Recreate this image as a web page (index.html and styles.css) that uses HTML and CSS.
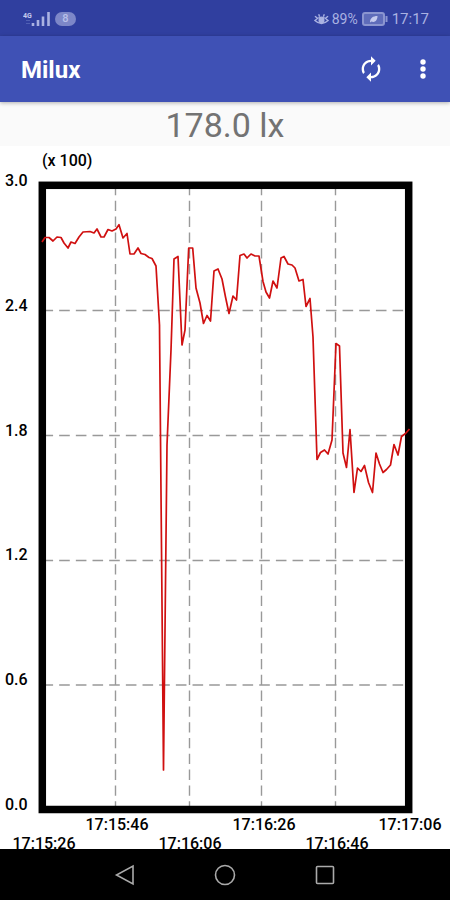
FILE: index.html
```html
<!DOCTYPE html>
<html lang="en">
<head>
<meta charset="utf-8">
<meta name="viewport" content="width=device-width, initial-scale=1">
<title>Milux</title>
<link rel="stylesheet" href="styles.css">
</head>
<body>
<div class="status">
  <div class="status-group">
    <svg class="signal" viewBox="0 0 28 16" aria-hidden="true">
      <text class="network" x="0" y="7">4G</text>
      <path class="faint" d="M3 9.500h4M3 12.500h4"/>
      <path d="M10 15v-3M15 15V9M20 15V5.500M25.500 15V1"/>
    </svg>
    <span class="badge">8</span>
  </div>
  <div class="status-group">
    <svg class="eye" viewBox="0 0 16 14" aria-hidden="true">
      <path d="M1 8.500Q8 1.500 15 8.500Q8 15 1 8.500zM1 4l2.500 2M5 2l1 2.500M11 2l-1 2.500M15 4l-2.500 2"/>
      <circle cx="8" cy="8.500" r="2.500"/>
    </svg>
    <span class="percent">89%</span>
    <svg class="battery" viewBox="0 0 26 14" aria-hidden="true">
      <rect class="charge" x="1" y="1" width="21" height="12" rx="2"/>
      <rect class="shell" x="1" y="1" width="21" height="12" rx="2"/>
      <path class="shell" d="M24.500 4v6"/>
      <path class="leaf" d="M8 10.500C8 6 11 4 15.500 4C15.500 8 13 11 9.500 9.500z"/>
    </svg>
    <span class="clock">17:17</span>
  </div>
</div>
<header class="app-bar">
  <h1>Milux</h1>
  <div class="actions">
    <button type="button" aria-label="Refresh">
      <svg class="icon" viewBox="0 0 24 24" aria-hidden="true"><path d="M12 6v3l4-4-4-4v3c-4.420 0-8 3.580-8 8 0 1.570.460 3.030 1.240 4.260L6.700 14.800c-.450-.830-.700-1.790-.700-2.800 0-3.310 2.690-6 6-6zm6.760 1.740L17.300 9.200c.440.840.700 1.790.700 2.800 0 3.310-2.690 6-6 6v-3l-4 4 4 4v-3c4.420 0 8-3.580 8-8 0-1.570-.460-3.030-1.240-4.260z"/></svg>
    </button>
    <button type="button" aria-label="More options">
      <svg class="icon" viewBox="0 0 24 24" aria-hidden="true"><circle cx="12" cy="6" r="2.300"/><circle cx="12" cy="12" r="2.300"/><circle cx="12" cy="18" r="2.300"/></svg>
    </button>
  </div>
</header>
<main>
  <p class="reading">178.0 lx</p>
  <svg class="chart" viewBox="0 146 450 703" role="img" aria-label="Illuminance over time">
    <g class="grid">
      <path class="rows" d="M42.500 310.500H408M42.500 435.500H408M42.500 560.500H408M42.500 685H408"/>
      <path class="columns" d="M115.500 185V810M189.500 185V810M261.500 185V810M335.500 185V810"/>
    </g>
    <rect class="frame" x="42.300" y="185.300" width="366.400" height="624.200"/>
    <polyline class="trace" points="42,242 45,237.500 49,237.500 53,241 57,237 61,237.500 64,243 68,248 71,242 75,243.500 79,237 83,232 90,231.500 94,233 97,229 101,237 104,237 108,229.500 112,231 116,229 119,224.700 123,238 127,233.500 130,254 134,254 138,248 141,253.500 145,254.500 149,257.500 152,258.500 156,266 159.500,325 163.500,770 167,445 171,350 174,259 178,256.500 182,345 185,330 188.700,248 192.700,248 196,288 200,303 203.500,323.500 207,315.500 210.500,321 214,271 218,269 222,279 225.500,297 229,313.500 233,296 236.500,300 240,255.500 244,254 247,258 251,254 255,256 259,256 263,281.500 266,292 269.500,298 273,281 277,288 281,258 284,256.500 288,264 292,265 295,268 299,281 303,279.500 306,306.500 310,298.500 313,337 317,459.500 320.500,452.500 324.500,450 328,454 332,440 336,343.500 339.500,346 343,453 346.500,467.500 350,429.500 354,492.500 357.500,468 361,471.500 364.500,465.500 368.500,482.500 372.500,492.500 376,453 379.500,464 383,472.500 386.500,469.500 390.500,465 394,444.500 398,455 401.500,436.500 405.500,433.500 409.500,429"/>
    <g class="labels">
      <text x="42" y="166">(x 100)</text>
      <text x="5" y="186">3.0</text>
      <text x="5" y="311">2.4</text>
      <text x="5" y="436">1.8</text>
      <text x="5" y="560">1.2</text>
      <text x="5" y="685">0.6</text>
      <text x="5" y="810">0.0</text>
    </g>
    <g class="labels times">
      <text x="117" y="830">17:15:46</text>
      <text x="264" y="830">17:16:26</text>
      <text x="410" y="830">17:17:06</text>
      <text x="44" y="849">17:15:26</text>
      <text x="190" y="849">17:16:06</text>
      <text x="337" y="849">17:16:46</text>
    </g>
  </svg>
</main>
<nav class="nav-bar" aria-label="System">
  <button type="button" aria-label="Back"><svg viewBox="0 0 24 24" aria-hidden="true"><path d="M20 3v18L3.500 12z"/></svg></button>
  <button type="button" aria-label="Home"><svg viewBox="0 0 24 24" aria-hidden="true"><circle cx="12" cy="12" r="9.500"/></svg></button>
  <button type="button" aria-label="Recent apps"><svg viewBox="0 0 24 24" aria-hidden="true"><rect x="3.500" y="3.500" width="17" height="17" rx="1"/></svg></button>
</nav>
</body>
</html>
```
FILE: styles.css
```css
* {
  box-sizing: border-box;
}

body {
  margin: 0;
  min-height: 100vh;
  display: flex;
  flex-direction: column;
  background: #fff;
  font-family: Roboto, "Liberation Sans", sans-serif;
}

button {
  display: flex;
  align-items: center;
  justify-content: center;
  padding: 0;
  border: 0;
  background: none;
}

.status {
  display: flex;
  align-items: center;
  justify-content: space-between;
  height: 36px;
  padding: 1px 21px 0 23px;
  background: #303f9f;
  color: #aab2e2;
}

.status-group {
  display: flex;
  align-items: center;
  gap: 4px;
}

.status svg {
  fill: none;
  stroke: #aab2e2;
}

.signal {
  width: 28px;
  height: 16px;
}

.status .signal {
  stroke-width: 2.6;
}

.signal .network {
  fill: #c5caee;
  stroke: none;
  font-size: 7px;
  font-weight: 700;
}

.signal .faint {
  stroke: #5060b4;
  stroke-width: 1;
}

.badge {
  width: 21px;
  height: 14px;
  border-radius: 7px;
  background: #7d87c8;
  color: #b9c0ea;
  font-size: 11px;
  font-weight: 500;
  line-height: 14px;
  text-align: center;
}

.eye {
  width: 15px;
  height: 14px;
  stroke-width: 1.5;
}

.status .eye circle {
  fill: #aab2e2;
}

.percent {
  margin-left: -1px;
  font-size: 14px;
}

.battery {
  width: 26px;
  height: 14px;
}

.battery .shell {
  stroke: #8b95d0;
  stroke-width: 2;
}

.status .battery .charge {
  fill: #5f6cba;
  stroke: none;
}

.status .battery .leaf {
  fill: #c5caee;
  stroke: none;
}

.clock {
  font-size: 15px;
}

.app-bar {
  position: relative;
  display: flex;
  align-items: center;
  justify-content: space-between;
  height: 66px;
  padding: 0 13px 0 21px;
  background: #3f51b5;
  box-shadow: 0 1px 4px rgba(0, 0, 0, 0.3);
  color: #fff;
}

h1 {
  margin: 0;
  padding-top: 2px;
  font-size: 24px;
  font-weight: 700;
  line-height: 32px;
}

.actions {
  display: flex;
  gap: 24px;
}

.icon {
  width: 28px;
  height: 28px;
  fill: #fff;
}

main {
  flex: 1;
}

.reading {
  margin: 0;
  padding-top: 2px;
  background: #fafafa;
  color: #737373;
  font-size: 34px;
  line-height: 42px;
  text-align: center;
}

.chart {
  display: block;
  width: 100%;
  height: auto;
  overflow: hidden;
}

.grid {
  fill: none;
  stroke: #999;
  stroke-width: 1.4;
}

.rows {
  stroke-dasharray: 10.600 6.070;
}

.columns {
  stroke-dasharray: 10.300 5.500;
}

.frame {
  fill: none;
  stroke: #000;
  stroke-width: 7.5;
}

.trace {
  fill: none;
  stroke: #d01010;
  stroke-width: 1.7;
  stroke-linejoin: round;
}

.labels {
  fill: #000;
  font-size: 16px;
  font-weight: 500;
}

.times {
  text-anchor: middle;
}

.nav-bar {
  display: flex;
  align-items: center;
  justify-content: center;
  gap: 76px;
  height: 51px;
  background: #000;
}

.nav-bar svg {
  width: 24px;
  height: 24px;
  fill: none;
  stroke: #aaa;
  stroke-width: 1.6;
}
```
